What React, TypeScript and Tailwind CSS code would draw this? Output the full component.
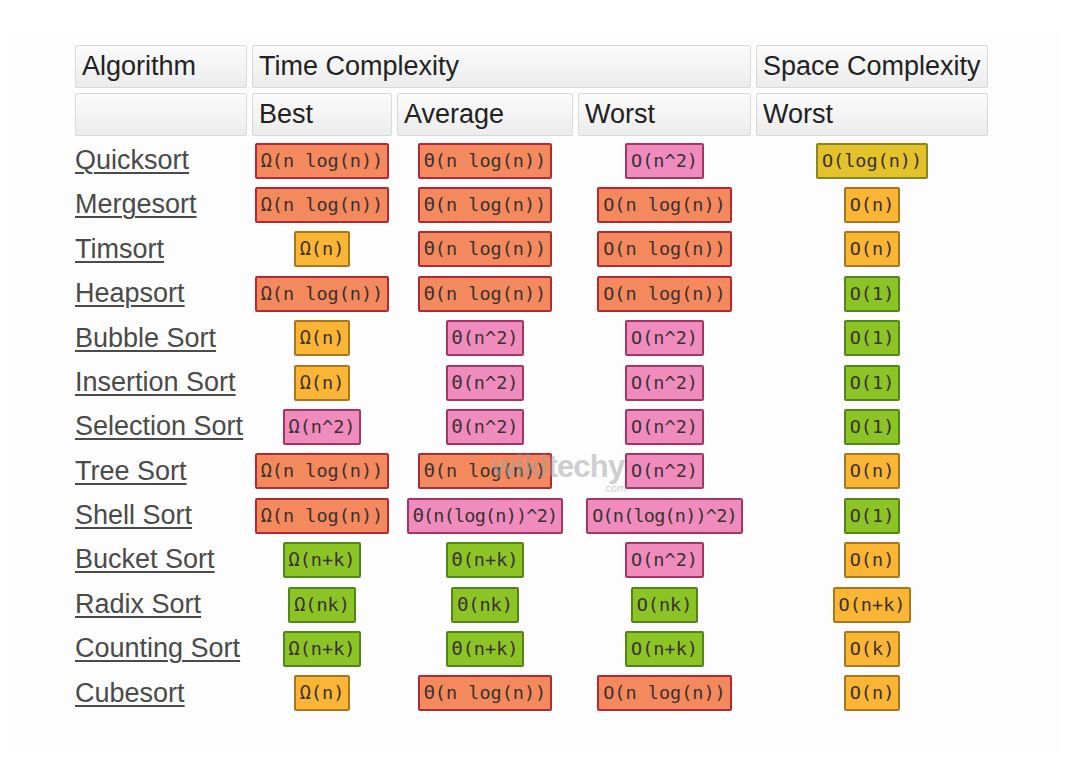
import React from "react";

type Kind = "o" | "y" | "p" | "g" | "gr";

const kindCls: Record<Kind, string> = {
  o: "bg-[#f5895e] border-[#b02a36]",
  y: "bg-[#fbb534] border-[#a8781f]",
  p: "bg-[#f08cbd] border-[#a33663]",
  g: "bg-[#e4c22c] border-[#86881f]",
  gr: "bg-[#8cc425] border-[#54851a]",
};

type Cell = [string, Kind];

const rows: { name: string; cells: Cell[] }[] = [
  { name: "Quicksort", cells: [["Ω(n log(n))", "o"], ["Θ(n log(n))", "o"], ["O(n^2)", "p"], ["O(log(n))", "g"]] },
  { name: "Mergesort", cells: [["Ω(n log(n))", "o"], ["Θ(n log(n))", "o"], ["O(n log(n))", "o"], ["O(n)", "y"]] },
  { name: "Timsort", cells: [["Ω(n)", "y"], ["Θ(n log(n))", "o"], ["O(n log(n))", "o"], ["O(n)", "y"]] },
  { name: "Heapsort", cells: [["Ω(n log(n))", "o"], ["Θ(n log(n))", "o"], ["O(n log(n))", "o"], ["O(1)", "gr"]] },
  { name: "Bubble Sort", cells: [["Ω(n)", "y"], ["Θ(n^2)", "p"], ["O(n^2)", "p"], ["O(1)", "gr"]] },
  { name: "Insertion Sort", cells: [["Ω(n)", "y"], ["Θ(n^2)", "p"], ["O(n^2)", "p"], ["O(1)", "gr"]] },
  { name: "Selection Sort", cells: [["Ω(n^2)", "p"], ["Θ(n^2)", "p"], ["O(n^2)", "p"], ["O(1)", "gr"]] },
  { name: "Tree Sort", cells: [["Ω(n log(n))", "o"], ["Θ(n log(n))", "o"], ["O(n^2)", "p"], ["O(n)", "y"]] },
  { name: "Shell Sort", cells: [["Ω(n log(n))", "o"], ["Θ(n(log(n))^2)", "p"], ["O(n(log(n))^2)", "p"], ["O(1)", "gr"]] },
  { name: "Bucket Sort", cells: [["Ω(n+k)", "gr"], ["Θ(n+k)", "gr"], ["O(n^2)", "p"], ["O(n)", "y"]] },
  { name: "Radix Sort", cells: [["Ω(nk)", "gr"], ["Θ(nk)", "gr"], ["O(nk)", "gr"], ["O(n+k)", "y"]] },
  { name: "Counting Sort", cells: [["Ω(n+k)", "gr"], ["Θ(n+k)", "gr"], ["O(n+k)", "gr"], ["O(k)", "y"]] },
  { name: "Cubesort", cells: [["Ω(n)", "y"], ["Θ(n log(n))", "o"], ["O(n log(n))", "o"], ["O(n)", "y"]] },
];

function Badge({ text, kind }: { text: string; kind: Kind }) {
  const long = text.length > 12;
  return (
    <span
      className={`inline-block h-[36px] border-2 rounded-[2px] px-[4px] leading-[32px] text-[18.5px] text-[#3a3030] whitespace-nowrap ${kindCls[kind]} ${long ? "tracking-[-0.8px]" : ""}`}
      style={{ fontFamily: '"DejaVu Sans Mono", "Liberation Mono", monospace' }}
    >
      {text}
    </span>
  );
}

const headCls =
  "h-[43px] flex items-center pl-[6px] border border-[#d9d9d9] rounded-[2px] bg-gradient-to-b from-[#fbfbfb] to-[#ececec] text-[27px] text-[#222]";

export default function App() {
  return (
    <div
      className="w-[1071px] h-[763px] bg-white relative overflow-hidden"
      style={{ fontFamily: '"Liberation Sans", Arial, sans-serif' }}
    >
      <div className="ml-[15px] mt-[33px] w-[1045px] h-[719px] bg-[#fdfdfd] pl-[60px] pt-[12px]">
        <div className="grid grid-cols-[172px_140px_176px_173px_232px] gap-[5px]">
          <div className={headCls}>Algorithm</div>
          <div className={`${headCls} col-span-3`}>Time Complexity</div>
          <div className={headCls}>Space Complexity</div>
          <div className={headCls}></div>
          <div className={headCls}>Best</div>
          <div className={headCls}>Average</div>
          <div className={headCls}>Worst</div>
          <div className={headCls}>Worst</div>
          {rows.map((r) => (
            <React.Fragment key={r.name}>
              <div className="h-[39.4px] flex items-center">
                <a className="text-[27px] text-[#4a4a4a] underline decoration-[1.5px] underline-offset-[3px] whitespace-nowrap -mt-[1px]">
                  {r.name}
                </a>
              </div>
              {r.cells.map(([t, k], i) => (
                <div key={i} className="h-[39.4px] flex items-center justify-center">
                  <Badge text={t} kind={k} />
                </div>
              ))}
            </React.Fragment>
          ))}
        </div>
      </div>
      <div className="absolute left-[492px] top-[451px] pointer-events-none flex flex-col items-end opacity-50">
        <span className="text-[31px] font-bold text-[#a0a0a0] leading-none tracking-[-0.8px] pr-[2px]">wikitechy</span>
        <span className="text-[11px] text-[#a0a0a0] leading-none mt-[1px]">.com</span>
      </div>
    </div>
  );
}
